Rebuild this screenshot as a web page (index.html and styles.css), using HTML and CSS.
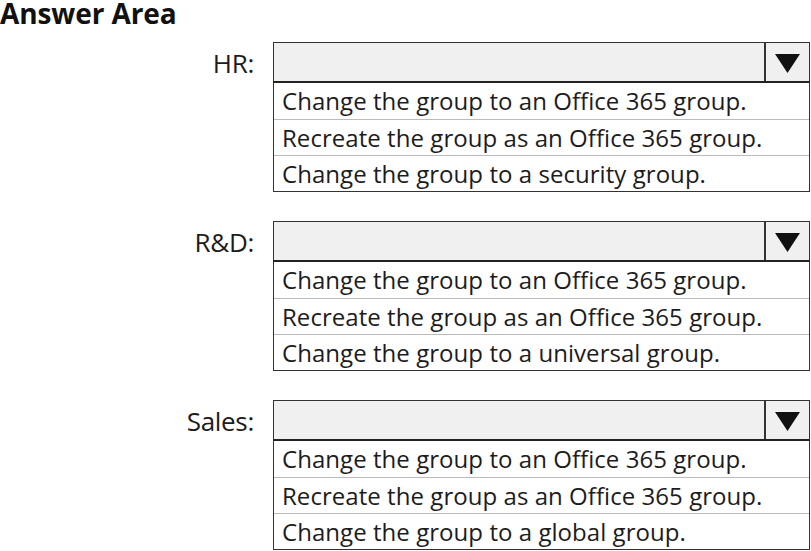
FILE: index.html
```html
<!DOCTYPE html>
<html>
<head>
<meta charset="utf-8">
<link rel="stylesheet" href="styles.css">
</head>
<body>
<h1 class="title">Answer Area</h1>
<div class="rows">
  <div class="row">
    <div class="label">HR:</div>
    <div class="dropdown">
      <div class="select"><span class="value"></span><span class="btn"><svg width="25" height="19" viewBox="0 0 25 19"><polygon points="0,0 25,0 12.5,19" fill="#111"/></svg></span></div>
      <ul class="options">
        <li>Change the group to an Office 365 group.</li>
        <li>Recreate the group as an Office 365 group.</li>
        <li>Change the group to a security group.</li>
      </ul>
    </div>
  </div>
  <div class="row">
    <div class="label">R&amp;D:</div>
    <div class="dropdown">
      <div class="select"><span class="value"></span><span class="btn"><svg width="25" height="19" viewBox="0 0 25 19"><polygon points="0,0 25,0 12.5,19" fill="#111"/></svg></span></div>
      <ul class="options">
        <li>Change the group to an Office 365 group.</li>
        <li>Recreate the group as an Office 365 group.</li>
        <li>Change the group to a universal group.</li>
      </ul>
    </div>
  </div>
  <div class="row">
    <div class="label">Sales:</div>
    <div class="dropdown">
      <div class="select"><span class="value"></span><span class="btn"><svg width="25" height="19" viewBox="0 0 25 19"><polygon points="0,0 25,0 12.5,19" fill="#111"/></svg></span></div>
      <ul class="options">
        <li>Change the group to an Office 365 group.</li>
        <li>Recreate the group as an Office 365 group.</li>
        <li>Change the group to a global group.</li>
      </ul>
    </div>
  </div>
</div>
</body>
</html>
```
FILE: styles.css
```css
html, body {
  margin: 0;
  padding: 0;
  background: #fff;
}
body {
  font-family: "Open Sans", "Noto Sans", sans-serif;
  color: #1c1c1c;
  width: 811px;
}
.title {
  margin: 0;
  padding-top: 1px;
  font-size: 28px;
  font-weight: 700;
  line-height: 24px;
  height: 41px;
  color: #111;
  letter-spacing: -0.1px;
}
.rows {
  display: flex;
  flex-direction: column;
  gap: 29px;
}
.row {
  display: grid;
  grid-template-columns: 273px 537px;
}
.label {
  height: 41px;
  display: flex;
  align-items: center;
  justify-content: flex-end;
  padding-right: 19px;
  font-size: 26px;
  letter-spacing: -0.3px;
  color: #1c1c1c;
}
.dropdown {
  display: flex;
  flex-direction: column;
}
.select {
  height: 38px;
  display: flex;
  background: #f0f0f0;
  border: 1px solid #333;
  border-bottom: 2px solid #222;
}
.value {
  flex: 1;
}
.btn {
  width: 45px;
  border-left: 2px solid #333;
  display: flex;
  align-items: center;
  justify-content: center;
  padding-top: 3px;
  box-sizing: border-box;
}
.options {
  list-style: none;
  margin: 0;
  padding: 0;
  border: 1px solid #333;
  border-top: none;
}
.options li {
  height: 35px;
  line-height: 35px;
  padding-left: 8px;
  font-size: 24px;
  letter-spacing: 0.05px;
  color: #1c1c1c;
  border-top: 1px solid #bbb;
  white-space: nowrap;
}
.options li:first-child {
  border-top: none;
  height: 36px;
}
```
